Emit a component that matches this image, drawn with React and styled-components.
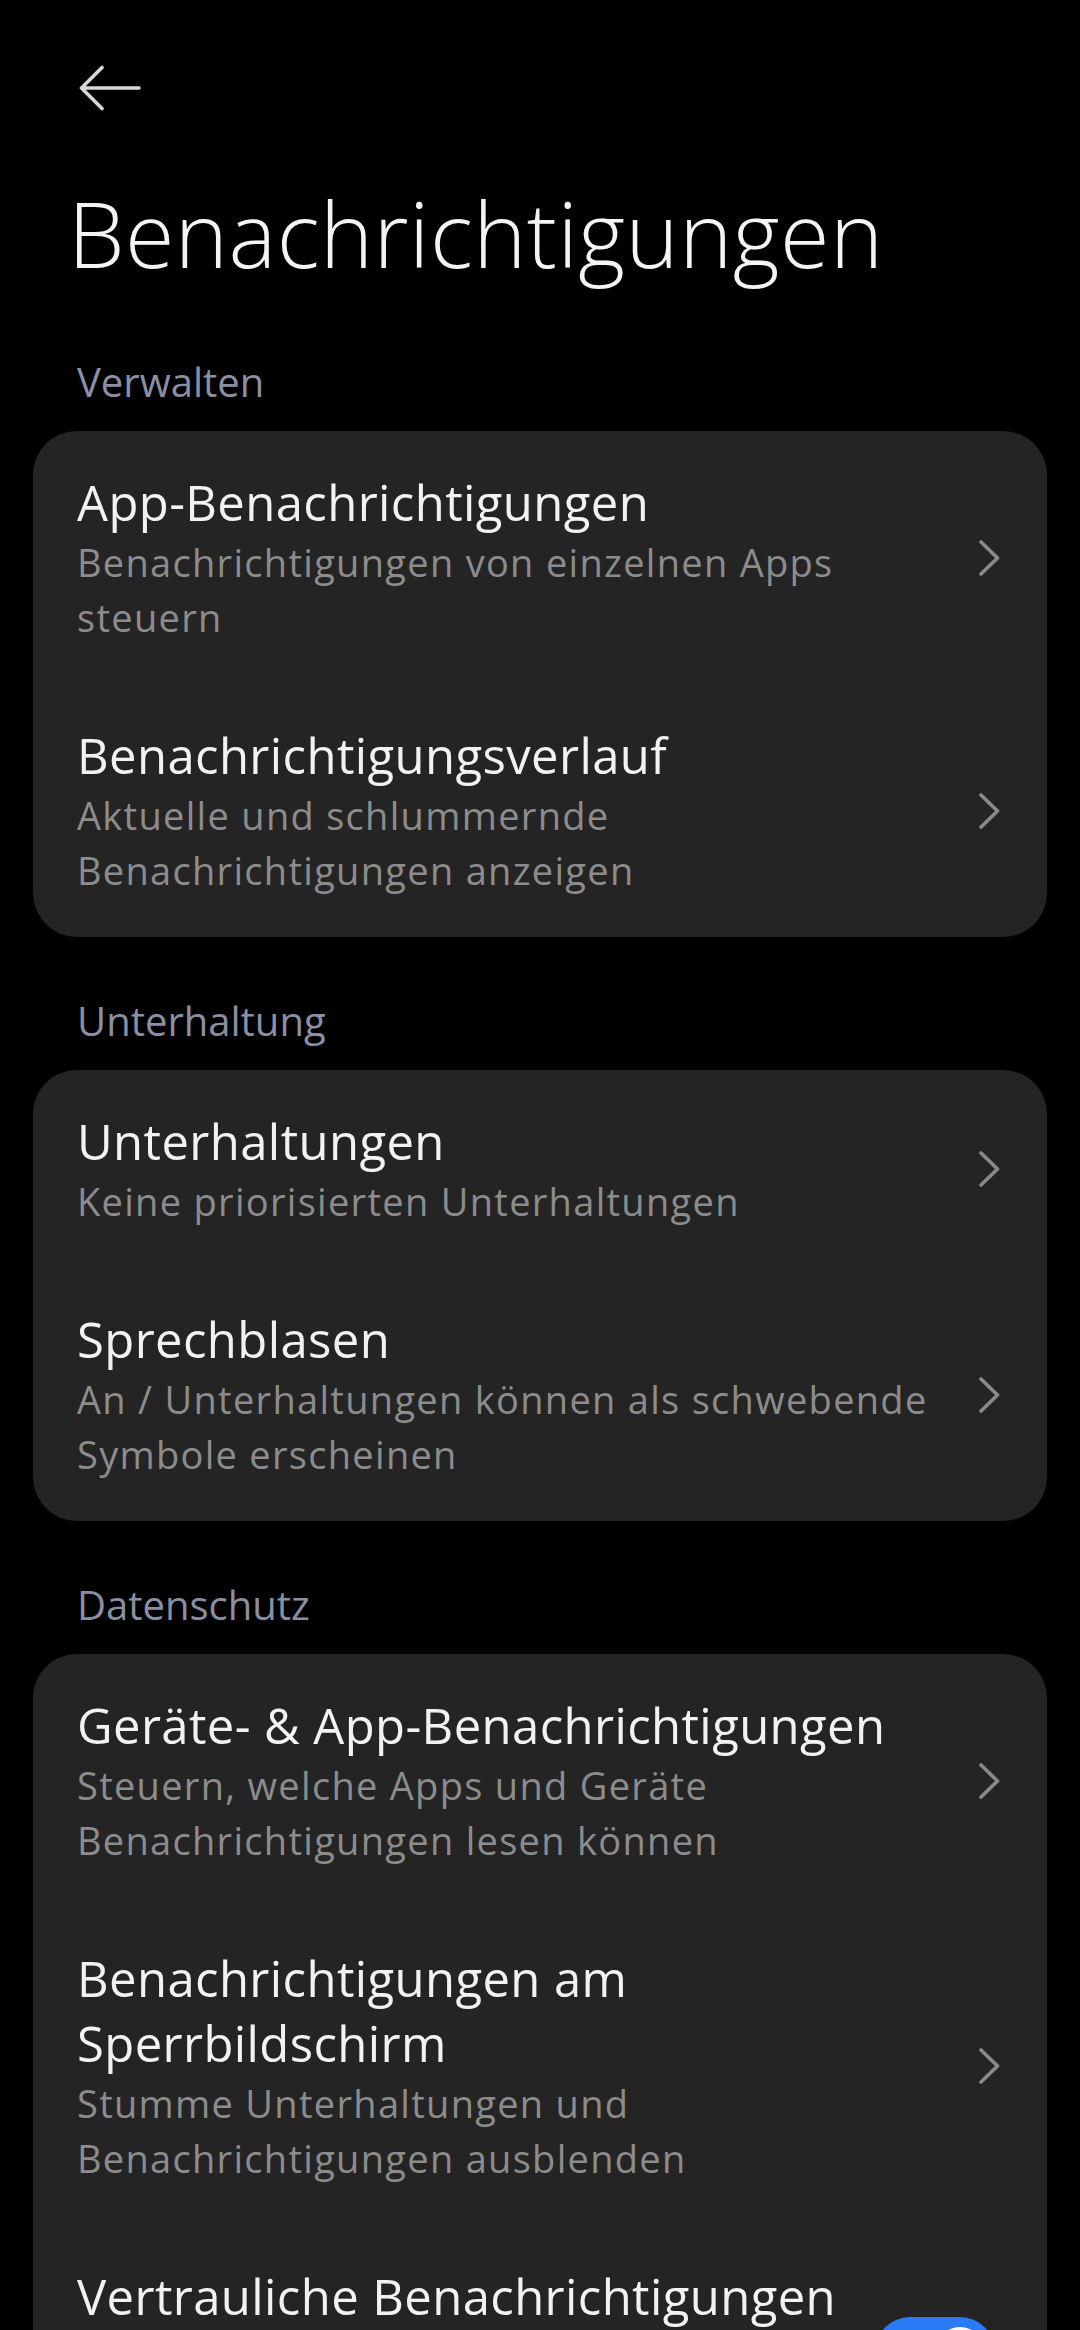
import React from "react";
import styled, { createGlobalStyle } from "styled-components";

const GlobalStyle = createGlobalStyle`
  html, body {
    margin: 0;
    padding: 0;
    background: #000;
  }
  body {
    font-family: "Open Sans", "Noto Sans", sans-serif;
    -webkit-font-smoothing: antialiased;
  }
  * { box-sizing: border-box; }
`;

const Page = styled.div`
  width: 1080px;
  min-height: 2330px;
  background: #000;
  padding-bottom: 80px;
`;

const TopBar = styled.div`
  height: 181px;
  padding: 65px 0 0 78px;
  svg { display: block; }
`;

const PageTitle = styled.h1`
  margin: 0;
  padding-left: 68px;
  font-size: 90px;
  line-height: 104px;
  font-weight: 300;
  color: #f4f4f4;
  letter-spacing: 0.5px;
`;

const Section = styled.section`
  margin-top: ${(p) => (p.$first ? "70px" : "57px")};
`;

const SectionHeader = styled.div`
  padding-left: 77px;
  font-size: 40px;
  line-height: 54px;
  color: #8a8fa3;
  margin-bottom: 22px;
`;

const Card = styled.div`
  margin: 0 33px;
  background: #242424;
  border-radius: 44px;
  overflow: hidden;
`;

const Row = styled.div`
  display: flex;
  align-items: center;
  padding: 39px ${(p) => (p.$toggle ? "52px" : "47px")} 39px 44px;
  gap: 28px;
`;

const TextCol = styled.div`
  flex: 1;
  min-width: 0;
`;

const Title = styled.div`
  font-size: 49px;
  line-height: 65px;
  font-weight: 500;
  color: #f2f2f2;
  letter-spacing: 0.4px;
`;

const Subtitle = styled.div`
  font-size: 38px;
  line-height: 55px;
  color: #8c8c8c;
  letter-spacing: 1.3px;
`;

const ChevronBox = styled.div`
  flex: 0 0 24px;
  display: flex;
  align-items: center;
  justify-content: flex-end;
  svg { display: block; }
`;

const Toggle = styled.div`
  flex: 0 0 120px;
  height: 70px;
  border-radius: 35px;
  background: #2a7cf6;
  position: relative;
`;

const Thumb = styled.span`
  position: absolute;
  top: 10px;
  right: 10px;
  width: 50px;
  height: 50px;
  border-radius: 50%;
  background: #ffffff;
`;

const BackArrow = () => (
  <svg width="64" height="46" viewBox="0 0 64 46" fill="none">
    <path
      d="M3.5 23 H61 M3.5 23 L24 2.5 M3.5 23 L24 43.5"
      stroke="#d8d8d8"
      strokeWidth="3.6"
      strokeLinecap="round"
      strokeLinejoin="round"
    />
  </svg>
);

const Chevron = () => (
  <svg width="22" height="38" viewBox="0 0 22 38" fill="none">
    <path
      d="M3 3 L19.5 19 L3 35"
      stroke="#8a8a8a"
      strokeWidth="3.6"
      strokeLinecap="round"
      strokeLinejoin="round"
    />
  </svg>
);

const Item = ({ title, subtitle, toggle }) => (
  <Row $toggle={toggle}>
    <TextCol>
      <Title>{title}</Title>
      {subtitle && <Subtitle>{subtitle}</Subtitle>}
    </TextCol>
    {toggle ? (
      <Toggle>
        <Thumb />
      </Toggle>
    ) : (
      <ChevronBox>
        <Chevron />
      </ChevronBox>
    )}
  </Row>
);

const sections = [
  {
    header: "Verwalten",
    items: [
      {
        title: "App-Benachrichtigungen",
        subtitle: "Benachrichtigungen von einzelnen Apps steuern",
      },
      {
        title: "Benachrichtigungsverlauf",
        subtitle: "Aktuelle und schlummernde Benachrichtigungen anzeigen",
      },
    ],
  },
  {
    header: "Unterhaltung",
    items: [
      {
        title: "Unterhaltungen",
        subtitle: "Keine priorisierten Unterhaltungen",
      },
      {
        title: "Sprechblasen",
        subtitle: "An / Unterhaltungen können als schwebende Symbole erscheinen",
      },
    ],
  },
  {
    header: "Datenschutz",
    items: [
      {
        title: "Geräte- & App-Benachrichtigungen",
        subtitle: "Steuern, welche Apps und Geräte Benachrichtigungen lesen können",
      },
      {
        title: "Benachrichtigungen am Sperrbildschirm",
        subtitle: "Stumme Unterhaltungen und Benachrichtigungen ausblenden",
      },
      {
        title: "Vertrauliche Benachrichtigungen",
        subtitle: "Vertrauliche Inhalte auf dem Sperrbildschirm anzeigen",
        toggle: true,
      },
    ],
  },
];

export default function App() {
  return (
    <Page>
      <GlobalStyle />
      <TopBar>
        <BackArrow />
      </TopBar>
      <PageTitle>Benachrichtigungen</PageTitle>
      {sections.map((s, i) => (
        <Section key={s.header} $first={i === 0}>
          <SectionHeader>{s.header}</SectionHeader>
          <Card>
            {s.items.map((it) => (
              <Item key={it.title} {...it} />
            ))}
          </Card>
        </Section>
      ))}
    </Page>
  );
}
